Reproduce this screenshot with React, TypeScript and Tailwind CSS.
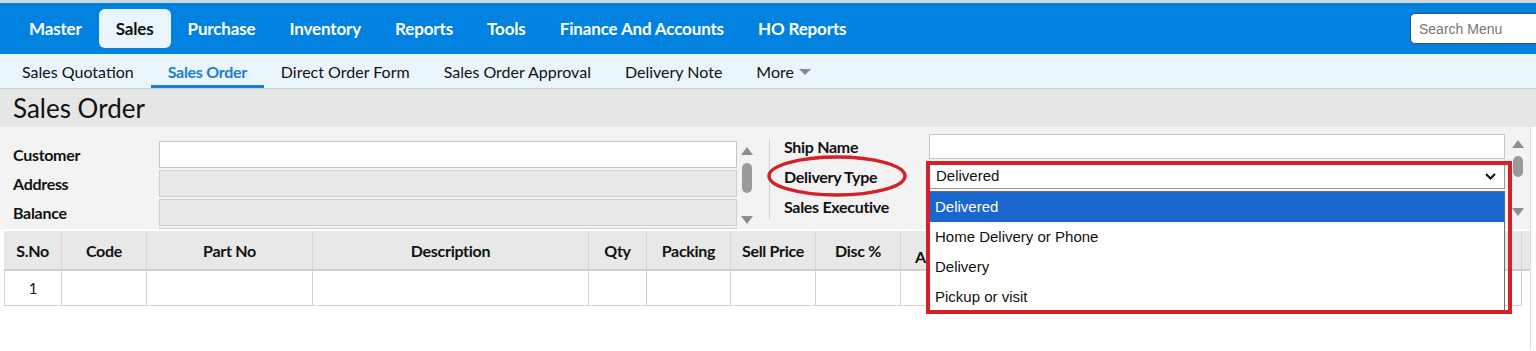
import React from "react";

const navItems = ["Master", "Sales", "Purchase", "Inventory", "Reports", "Tools", "Finance And Accounts", "HO Reports"];
const subItems = ["Sales Quotation", "Sales Order", "Direct Order Form", "Sales Order Approval", "Delivery Note"];
const options = ["Delivered", "Home Delivery or Phone", "Delivery", "Pickup or visit"];

// columns past "Amount" sit under the open dropdown, so they carry no caption
const columns = [
    { key: "sno", label: "S.No", w: "w-[58px]" },
    { key: "code", label: "Code", w: "w-[85px]" },
    { key: "part", label: "Part No", w: "w-[166px]" },
    { key: "desc", label: "Description", w: "w-[276px]" },
    { key: "qty", label: "Qty", w: "w-[58px]" },
    { key: "pack", label: "Packing", w: "w-[84px]" },
    { key: "price", label: "Sell Price", w: "w-[85px]" },
    { key: "disc", label: "Disc %", w: "w-[85px]" },
    { key: "amt", label: "Amount", w: "w-[100px]", low: true },
    { key: "c10", label: "", w: "w-[80px]" },
    { key: "c11", label: "", w: "w-[90px]" },
    { key: "c12", label: "", w: "w-[110px]" },
    { key: "c13", label: "", w: "w-[90px]" },
    { key: "c14", label: "", w: "w-[151px]" },
];

const UpArrow = () => (
    <svg width="12" height="8" viewBox="0 0 12 8"><path d="M6 0 L12 8 L0 8 Z" fill="#8e8e8e" /></svg>
);
const DownArrow = () => (
    <svg width="12" height="8" viewBox="0 0 12 8"><path d="M0 0 L12 0 L6 8 Z" fill="#8e8e8e" /></svg>
);

const App = () => {
    return (
        <div className="w-[1536px] h-[351px] overflow-hidden bg-white font-['Lato',sans-serif] text-[#111]">
            <div className="h-[3px] bg-[#cdd6df]" />

            {/* main menu */}
            <div className="h-[51px] bg-[#0282e0] flex items-center pl-[12px] overflow-hidden">
                {navItems.map(item => (
                    <div
                        key={item}
                        className={`h-[39px] px-[17px] flex items-center text-[17px] font-bold tracking-[-0.15px] rounded-[6px] ${
                            item === "Sales" ? "bg-[#eaf4fc] text-[#111]" : "text-white"
                        }`}
                    >
                        {item}
                    </div>
                ))}
                <input
                    placeholder="Search Menu"
                    className="ml-auto mr-[-30px] w-[156px] h-[31px] rounded-[5px] border border-[#35506a] bg-white pl-[8px] text-[14px] font-['Liberation_Sans',sans-serif] placeholder:text-[#777] outline-none"
                />
            </div>

            {/* sub menu */}
            <div className="h-[35px] bg-[#eaf4fb] border-b border-[#c8d2db] flex items-stretch pl-[5px]">
                {subItems.map(item => (
                    <div
                        key={item}
                        className={`px-[17px] flex items-center text-[16px] border-b-[3px] pt-[5px] ${
                            item === "Sales Order"
                                ? "text-[#1b7fd1] font-bold tracking-[-0.3px] border-[#1b7fd1]"
                                : "text-[#111] border-transparent"
                        }`}
                    >
                        {item}
                    </div>
                ))}
                <div className="px-[17px] flex items-center gap-[5px] text-[16px] text-[#111] pt-[5px] border-b-[3px] border-transparent">
                    More
                    <svg width="12" height="7" viewBox="0 0 12 7"><path d="M0 0 L12 0 L6 6 Z" fill="#888" /></svg>
                </div>
            </div>

            {/* title */}
            <div className="h-[38px] bg-[#e6e6e6] flex items-center pl-[13px] pt-[1px] text-[26px] text-[#111]">
                Sales Order
            </div>

            <div className="flex">
                <div className="w-[1530px]">
                    {/* header form */}
                    <div className="h-[102px] bg-[#f3f3f3] flex">
                        <div className="w-[737px] h-[102px] overflow-hidden flex flex-col gap-[2px] pt-[14px]">
                            {["Customer", "Address", "Balance", ""].map((label, i) => (
                                <div key={i} className="flex items-center shrink-0 h-[27px]">
                                    <div className="w-[159px] pl-[13px] text-[16px] font-bold tracking-[-0.3px]">{label}</div>
                                    <div
                                        className={`w-[578px] h-[27px] border ${
                                            i === 0 ? "bg-white border-[#c6c6c6]" : "bg-[#e8e8e8] border-[#cfcfcf]"
                                        }`}
                                    />
                                </div>
                            ))}
                        </div>
                        <div className="w-[20px] flex flex-col items-center pt-[20px]">
                            <UpArrow />
                            <div className="mt-[8px] w-[10px] h-[30px] rounded-full bg-[#9a9a9a]" />
                            <div className="mt-[23px]"><DownArrow /></div>
                        </div>
                        <div className="ml-[12px] mt-[12px] w-px h-[80px] bg-[#cfcfcf]" />

                        <div className="flex flex-col gap-[5px] pt-[7px]">
                            {["Ship Name", "Delivery Type", "Sales Executive"].map((label, i) => (
                                <div key={label} className="flex items-center h-[25px]">
                                    <div className="relative w-[145px] ml-[14px] text-[16px] font-bold tracking-[-0.3px]">
                                        {label}
                                        {i === 1 && (
                                            <svg className="absolute left-[-17px] top-[-10px]" width="140" height="42" viewBox="0 0 140 42">
                                                <ellipse cx="70" cy="21" rx="68" ry="19" fill="none" stroke="#d42127" strokeWidth="3.5" />
                                            </svg>
                                        )}
                                    </div>
                                    {i === 1 ? (
                                        <div className="relative z-10 w-[576px] h-[25px]">
                                            <div className="h-[25px] bg-white border border-[#9a9a9a] flex items-center justify-between pl-[6px] pr-[8px] font-['Liberation_Sans',sans-serif] text-[15px]">
                                                Delivered
                                                <svg width="11" height="7" viewBox="0 0 11 7">
                                                    <path d="M1 1 L5.5 5.5 L10 1" fill="none" stroke="#111" strokeWidth="2" />
                                                </svg>
                                            </div>
                                            <div className="absolute left-0 top-[27px] w-[576px] h-[121px] bg-white border border-[#6c6c6c] font-['Liberation_Sans',sans-serif] text-[15px]">
                                                {options.map((opt, j) => (
                                                    <div
                                                        key={opt}
                                                        className={`h-[30px] flex items-center pl-[5px] ${
                                                            j === 0 ? "bg-[#1a66cf] text-white" : "text-[#111]"
                                                        }`}
                                                    >
                                                        {opt}
                                                    </div>
                                                ))}
                                            </div>
                                            <div className="absolute left-[-3px] top-[-3px] right-[-7px] h-[153px] border-[4px] border-[#d42127] pointer-events-none" />
                                        </div>
                                    ) : (
                                        <div className="w-[576px] h-[25px] bg-white border border-[#c6c6c6]" />
                                    )}
                                </div>
                            ))}
                        </div>

                        <div className="w-[25px] flex flex-col items-center pt-[13px]">
                            <UpArrow />
                            <div className="mt-[8px] w-[10px] h-[21px] rounded-full bg-[#9a9a9a]" />
                            <div className="mt-[31px]"><DownArrow /></div>
                        </div>
                    </div>

                    {/* item grid */}
                    <div className="mt-[2px] pl-[4px]">
                        <div className="flex h-[40px] bg-[#e8e8e8] border-b-[2px] border-[#cfcfcf]">
                            {columns.map(col => (
                                <div
                                    key={col.key}
                                    className={`${col.w} shrink-0 flex border-r border-[#d6d6d6] text-[16px] font-bold tracking-[-0.3px] ${
                                        col.low ? "items-end justify-start pl-[14px]" : "items-center justify-center pt-[2px]"
                                    }`}
                                >
                                    {col.label}
                                </div>
                            ))}
                        </div>
                        <div className="flex h-[35px] bg-white">
                            {columns.map((col, i) => (
                                <div
                                    key={col.key}
                                    className={`${col.w} shrink-0 flex items-center justify-center border-r border-b border-[#d0d0d0] text-[15px] ${
                                        i === 0 ? "border-l" : ""
                                    }`}
                                >
                                    {i === 0 ? "1" : ""}
                                </div>
                            ))}
                        </div>
                    </div>
                </div>
                <div className="w-[6px] h-[223px] border-l border-[#dcdcdc] bg-white" />
            </div>
        </div>
    );
};

export default App;
